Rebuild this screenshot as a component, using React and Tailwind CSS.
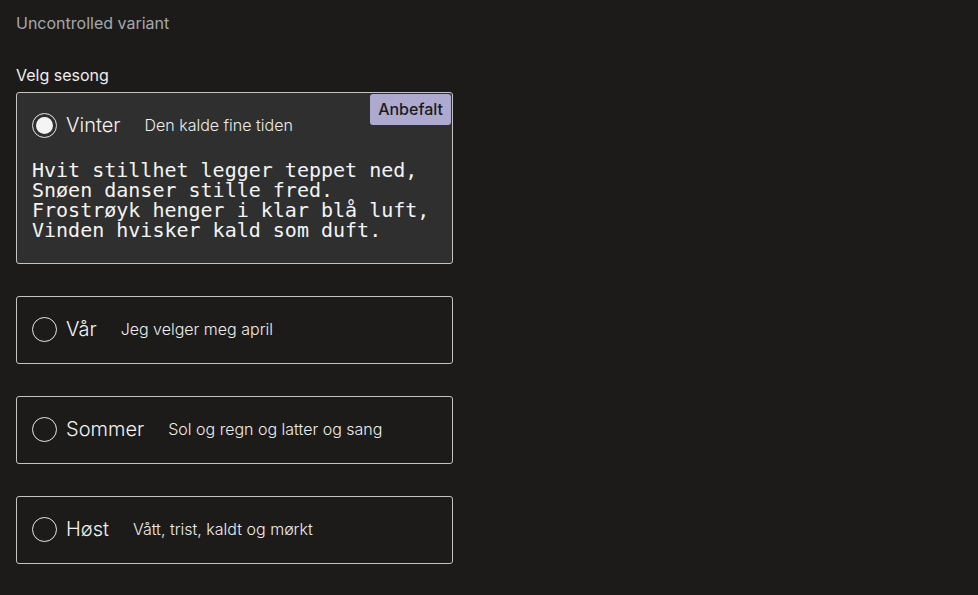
import React from 'react';

const SEASONS = [
  { id: 'vinter', label: 'Vinter', desc: 'Den kalde fine tiden' },
  { id: 'var', label: 'Vår', desc: 'Jeg velger meg april' },
  { id: 'sommer', label: 'Sommer', desc: 'Sol og regn og latter og sang' },
  { id: 'host', label: 'Høst', desc: 'Vått, trist, kaldt og mørkt' },
];

const POEM = `Hvit stillhet legger teppet ned,
Snøen danser stille fred.
Frostrøyk henger i klar blå luft,
Vinden hvisker kald som duft.`;

function Radio({ checked }) {
  return (
    <span className="flex h-[25px] w-[25px] shrink-0 items-center justify-center rounded-full border-[1.5px] border-[#e6e6e6]">
      {checked && <span className="h-[17px] w-[17px] rounded-full bg-[#f4f4f4]" />}
    </span>
  );
}

function SeasonCard({ season, checked }) {
  return (
    <label
      className={`relative block w-[437px] rounded-[3px] border border-[#c4c4c4] px-[15px] ${
        checked ? 'bg-[#2f2f2f] pt-[19px] pb-[23px]' : 'h-[68px] pt-[19px]'
      }`}
    >
      {checked && (
        <span className="absolute right-[1px] top-[1px] rounded-[3px] bg-[#aeaacf] px-[8px] py-[4px] text-[16px] leading-[23px] font-medium text-[#1b1b1b]">
          Anbefalt
        </span>
      )}
      <div className="flex items-center">
        <Radio checked={checked} />
        <span className="ml-[9px] text-[20px] leading-[26px] font-light text-[#f2f2f2]">{season.label}</span>
        <span className="ml-[24px] text-[16px] leading-[24px] font-light text-[#ececec]">{season.desc}</span>
      </div>
      {checked && (
        <pre className="mt-[22px] font-['DejaVu_Sans_Mono',monospace] text-[20px] leading-[20px] text-[#f4f4f4]">
          {POEM}
        </pre>
      )}
    </label>
  );
}

export default function App() {
  return (
    <div className="min-h-screen bg-[#1c1b1a] px-[16px] pt-[12px] font-['Inter',sans-serif]">
      <p className="text-[16px] leading-[22px] text-[#a3a8ad]">Uncontrolled variant</p>
      <p className="mt-[30px] text-[16px] leading-[22px] text-[#eeeeee]">Velg sesong</p>
      <div className="mt-[6px] flex flex-col gap-[32px]">
        {SEASONS.map((s, i) => (
          <SeasonCard key={s.id} season={s} checked={i === 0} />
        ))}
      </div>
    </div>
  );
}
